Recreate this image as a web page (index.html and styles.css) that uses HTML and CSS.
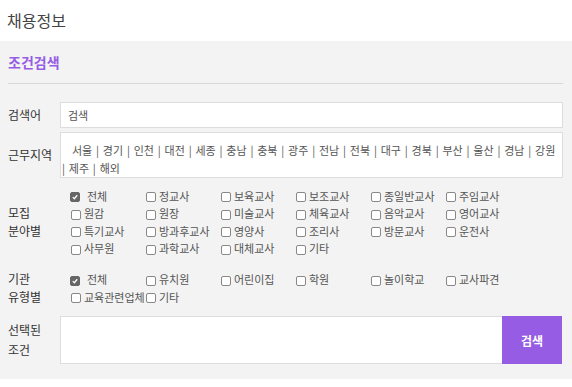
FILE: index.html
```html
<!DOCTYPE html>
<html lang="ko">
<head>
    <meta charset="UTF-8">
    <meta name="viewport" content="width=device-width, initial-scale=1.0">
    <title>채용정보</title>
    <link rel="stylesheet" href="styles.css">
</head>
<body>
    <div class="header">
        <h1>채용정보</h1>
    </div>
    <div class="panel">
        <h2 class="panel-title">조건검색</h2>
        <div class="form">
            <div class="row row-keyword">
                <div class="row-label">검색어</div>
                <input type="text" class="keyword" placeholder="검색">
            </div>
            <div class="row row-region">
                <div class="row-label">근무지역</div>
                <div class="region-box">
                    <div class="region-first">서울 | 경기 | 인천 | 대전 | 세종 | 충남 | 충북 | 광주 | 전남 | 전북 | 대구 | 경북 | 부산 | 울산 | 경남 | 강원</div>
                    <div>| 제주 | 해외</div>
                </div>
            </div>
            <div class="row row-field">
                <div class="row-label">모집<br>분야별</div>
                <div class="options">
                    <label class="opt checked"><span class="box"><svg viewBox="0 0 10 10"><path d="M2.2 5.2 L4.2 7.2 L7.8 2.8" /></svg></span>전체</label>
                    <label class="opt"><span class="box"></span>정교사</label>
                    <label class="opt"><span class="box"></span>보육교사</label>
                    <label class="opt"><span class="box"></span>보조교사</label>
                    <label class="opt"><span class="box"></span>종일반교사</label>
                    <label class="opt"><span class="box"></span>주임교사</label>
                    <label class="opt"><span class="box"></span>원감</label>
                    <label class="opt"><span class="box"></span>원장</label>
                    <label class="opt"><span class="box"></span>미술교사</label>
                    <label class="opt"><span class="box"></span>체육교사</label>
                    <label class="opt"><span class="box"></span>음악교사</label>
                    <label class="opt"><span class="box"></span>영어교사</label>
                    <label class="opt"><span class="box"></span>특기교사</label>
                    <label class="opt"><span class="box"></span>방과후교사</label>
                    <label class="opt"><span class="box"></span>영양사</label>
                    <label class="opt"><span class="box"></span>조리사</label>
                    <label class="opt"><span class="box"></span>방문교사</label>
                    <label class="opt"><span class="box"></span>운전사</label>
                    <label class="opt"><span class="box"></span>사무원</label>
                    <label class="opt"><span class="box"></span>과학교사</label>
                    <label class="opt"><span class="box"></span>대체교사</label>
                    <label class="opt"><span class="box"></span>기타</label>
                </div>
            </div>
            <div class="row row-type">
                <div class="row-label">기관<br>유형별</div>
                <div class="options">
                    <label class="opt checked"><span class="box"><svg viewBox="0 0 10 10"><path d="M2.2 5.2 L4.2 7.2 L7.8 2.8" /></svg></span>전체</label>
                    <label class="opt"><span class="box"></span>유치원</label>
                    <label class="opt"><span class="box"></span>어린이집</label>
                    <label class="opt"><span class="box"></span>학원</label>
                    <label class="opt"><span class="box"></span>놀이학교</label>
                    <label class="opt"><span class="box"></span>교사파견</label>
                    <label class="opt"><span class="box"></span>교육관련업체</label>
                    <label class="opt"><span class="box"></span>기타</label>
                </div>
            </div>
            <div class="row row-selected">
                <div class="row-label">선택된<br>조건</div>
                <div class="selected">
                    <div class="selected-area"></div>
                    <button class="search-btn">검색</button>
                </div>
            </div>
        </div>
    </div>
</body>
</html>
```
FILE: styles.css
```css
body {
    margin: 0;
    font-family: "Noto Sans CJK KR", "Noto Sans", sans-serif;
    color: #333;
    background: #fff;
}

.header {
    height: 41px;
    padding-left: 7px;
    display: flex;
    align-items: center;
}

.header h1 {
    margin: 0 0 2px;
    font-size: 16px;
    font-weight: normal;
    color: #444;
}

.panel {
    background: #f3f3f3;
    padding: 0 9px 15px 8px;
}

.panel-title {
    margin: 0;
    height: 42px;
    line-height: 42px;
    border-bottom: 1px solid #d9d9d9;
    font-size: 14px;
    font-weight: bold;
    color: #965de4;
}

.form {
    padding-top: 18px;
}

.row {
    display: grid;
    grid-template-columns: 52px 1fr;
    align-items: center;
}

.row-label {
    font-size: 12px;
    line-height: 18px;
    color: #333;
}

.row-region {
    margin-top: 4px;
}

.row-field {
    margin-top: 9px;
}

.row-type {
    margin-top: 13px;
}

.row-selected {
    margin-top: 10px;
}

.row-selected .row-label {
    line-height: 20px;
}

.keyword {
    box-sizing: border-box;
    height: 26px;
    border: 1px solid #ddd;
    background: #fff;
    padding: 0 7px;
    font-family: inherit;
    font-size: 11px;
    color: #555;
    outline: none;
}

.keyword::placeholder {
    color: #555;
}

.region-box {
    box-sizing: border-box;
    height: 46px;
    border: 1px solid #ddd;
    background: #fff;
    padding: 8px 0 0 1px;
    font-size: 11px;
    line-height: 18px;
    color: #555;
    white-space: nowrap;
    word-spacing: 0.75px;
}

.region-first {
    text-indent: 10px;
}

.options {
    display: grid;
    grid-template-columns: repeat(6, 75px);
    grid-auto-rows: 17.5px;
    padding-left: 10px;
    font-size: 11px;
    color: #555;
}

.opt {
    display: flex;
    align-items: center;
    white-space: nowrap;
    padding-left: 1px;
}

.box {
    box-sizing: border-box;
    width: 10px;
    height: 10px;
    margin: 3px 3px 0 0;
    border: 1px solid #888;
    border-radius: 2px;
    background: #fff;
    flex-shrink: 0;
}

.opt.checked {
    padding-left: 0;
}

.opt.checked .box {
    background: #666;
    border-color: #666;
    margin-right: 7px;
}

.box svg {
    display: block;
    width: 8px;
    height: 8px;
}

.box path {
    fill: none;
    stroke: #fff;
    stroke-width: 1.6;
}

.selected {
    display: flex;
    height: 48px;
    margin-right: 1px;
}

.selected-area {
    flex: 1;
    border: 1px solid #ddd;
    border-right: none;
    background: #fff;
}

.search-btn {
    width: 60px;
    border: none;
    background: #965de4;
    color: #fff;
    font-family: inherit;
    font-size: 12px;
    font-weight: bold;
    cursor: pointer;
}
```
